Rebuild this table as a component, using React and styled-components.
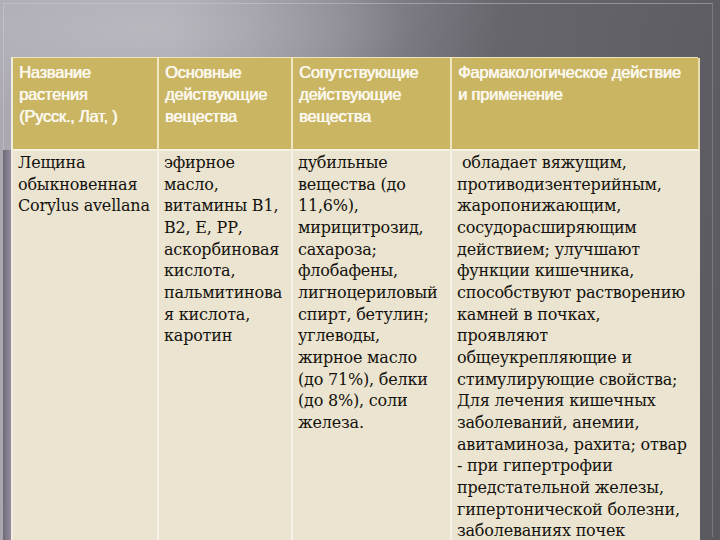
import React from 'react';
import styled, { createGlobalStyle } from 'styled-components';

const Global = createGlobalStyle`
  html, body { margin: 0; padding: 0; }
  body { width: 720px; height: 540px; overflow: hidden; background: #5a5960; }
`;

const Slide = styled.div`
  position: relative;
  width: 720px;
  height: 540px;
  box-sizing: border-box;
  padding: 57px 22px 0 11px;
  overflow: hidden;
  background:
    radial-gradient(ellipse 260px 90px at 150px 30px, rgba(200,199,204,0.55), rgba(200,199,204,0) 100%),
    linear-gradient(100deg, #aca9b3 0%, #a7a4ae 22%, #8a8891 42%, #67666d 62%, #5a5960 100%);
`;

const Frame = styled.div`
  position: absolute;
  inset: 3px 7px 3px 3px;
  border-left: 1px solid rgba(210,206,214,0.45);
  border-top: 1px solid rgba(210,206,214,0.45);
  border-right: 1px solid rgba(150,148,156,0.5);
  pointer-events: none;
`;

const LeftStrip = styled.div`
  position: absolute;
  left: 3px;
  top: 150px;
  bottom: 0;
  width: 8px;
  background: linear-gradient(90deg, #6f6a78, #948c9e);
`;

const Table = styled.div`
  position: relative;
  display: grid;
  grid-template-columns: 146px 134px 159px 248px;
  grid-template-rows: 93px 1fr;
  height: 500px;
  border-top: 1px solid #efe6b8;
  border-left: 2px solid #f2eedf;
  box-sizing: border-box;
`;

const HeadCell = styled.div`
  background: #c9b562;
  color: #fbf8ee;
  font-family: "Liberation Sans", Arial, sans-serif;
  font-size: 16.5px;
  line-height: 22px;
  padding: 3px 0 0 6px;
  border-right: 2px solid ${p => (p.last ? '#e8ddb0' : '#efe7c4')};
  border-bottom: 2px solid #f6f2e6;
  text-shadow: 0.4px 0 0 #fbf8ee, 0 0 1px rgba(255,255,255,0.5);
  letter-spacing: -0.25px;
  white-space: pre;
  overflow: hidden;
`;

const BodyCell = styled.div`
  background: #ebe4d0;
  color: #14120e;
  font-family: "DejaVu Serif", "Liberation Serif", serif;
  font-size: 16px;
  line-height: 21.65px;
  padding: 1px 0 0 5px;
  border-right: 2px solid ${p => (p.last ? '#ebe4d0' : '#f6f2e8')};
  white-space: pre;
  letter-spacing: -0.2px;
  overflow: hidden;
`;

const Line = styled.div``;

const headers = [
  ['Название', 'растения', '(Русск., Лат, )'],
  ['Основные', 'действующие', 'вещества'],
  ['Сопутствующие', 'действующие', 'вещества'],
  ['Фармакологическое действие', 'и применение'],
];

const body = [
  ['Лещина', 'обыкновенная', 'Corylus avellana'],
  ['эфирное', 'масло,', 'витамины В1,', 'В2, Е, РР,', 'аскорбиновая', 'кислота,', 'пальмитинова', 'я кислота,', 'каротин'],
  ['дубильные', 'вещества (до', '11,6%),', 'мирицитрозид,', 'сахароза;', 'флобафены,', 'лигноцериловый', 'спирт, бетулин;', 'углеводы,', 'жирное масло', '(до 71%), белки', '(до 8%), соли', 'железа.'],
  [' обладает вяжущим,', 'противодизентерийным,', 'жаропонижающим,', 'сосудорасширяющим', 'действием; улучшают', 'функции кишечника,', 'способствуют растворению', 'камней в почках,', 'проявляют', 'общеукрепляющие и', 'стимулирующие свойства;', 'Для лечения кишечных', 'заболеваний, анемии,', 'авитаминоза, рахита; отвар', '- при гипертрофии', 'предстательной железы,', 'гипертонической болезни,', 'заболеваниях почек'],
];

export default function App() {
  return (
    <>
      <Global />
      <Slide>
        <Frame />
        <LeftStrip />
        <Table>
          {headers.map((lines, i) => (
            <HeadCell key={'h' + i} last={i === headers.length - 1}>
              {lines.map((l, j) => <Line key={j}>{l}</Line>)}
            </HeadCell>
          ))}
          {body.map((lines, i) => (
            <BodyCell key={'b' + i} last={i === body.length - 1}>
              {lines.map((l, j) => <Line key={j}>{l}</Line>)}
            </BodyCell>
          ))}
        </Table>
      </Slide>
    </>
  );
}
